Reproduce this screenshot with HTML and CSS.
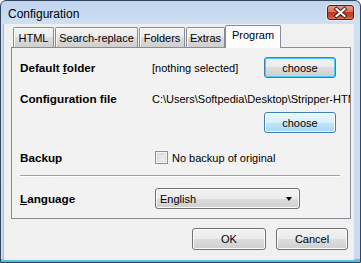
FILE: index.html
```
<!DOCTYPE html>
<html>
<head>
<meta charset="utf-8">
<link rel="stylesheet" href="styles.css">
</head>
<body>
<div class="window">
  <div class="titlebar">
    <span class="title">Configuration</span>
    <span class="close">
      <svg width="27" height="15" viewBox="0 0 27 15">
        <path d="M9.5 4 L17.5 11 M17.5 4 L9.5 11" stroke="#4a130c" stroke-width="4" stroke-linecap="square"/>
        <path d="M9.5 4 L17.5 11 M17.5 4 L9.5 11" stroke="#ffffff" stroke-width="2.2" stroke-linecap="square"/>
      </svg>
    </span>
  </div>
  <div class="client">
    <div class="tabs">
      <div class="tab t-html">HTML</div>
      <div class="tab t-sr">Search-replace</div>
      <div class="tab t-folders">Folders</div>
      <div class="tab t-extras">Extras</div>
      <div class="tab t-program active">Program</div>
    </div>
    <div class="panel">
      <div class="row r1">
        <span class="label">Default <u>f</u>older</span>
        <span class="value">[nothing selected]</span>
        <button class="btn focus choose">choose</button>
      </div>
      <div class="row r2">
        <span class="label">Configuration file</span>
        <span class="value path">C:\Users\Softpedia\Desktop\Stripper-HTML</span>
      </div>
      <div class="row btnrow">
        <button class="btn hover choose">choose</button>
      </div>
      <div class="row r3">
        <span class="label">Backup</span>
        <span class="check"><span class="box"></span><span>No backup of original</span></span>
      </div>
      <div class="sep"></div>
      <div class="row r4">
        <span class="label"><u>L</u>anguage</span>
        <div class="select"><span>English</span><span class="arrow"></span></div>
      </div>
    </div>
    <div class="footer">
      <button class="btn ok">OK</button>
      <button class="btn cancel">Cancel</button>
    </div>
  </div>
</div>
</body>
</html>
```
FILE: styles.css
```
html, body {
  margin: 0;
  padding: 0;
  background: #ffffff;
}
.window {
  width: 361px;
  height: 263px;
  box-sizing: border-box;
  border: 1px solid #34465e;
  border-radius: 6px 6px 0 0;
  background: linear-gradient(to bottom, #bfd4ed 0, #cfdff2 23px, #c8dbf0 calc(100% - 3px), #5fc4ea calc(100% - 3px), #5fc4ea calc(100% - 1px), #7fa6c4 calc(100% - 1px));
  padding: 0 6px 2px 3px;
  display: flex;
  flex-direction: column;
  font-family: "Liberation Sans", Arial, sans-serif;
  font-size: 11px;
  color: #000;
  overflow: hidden;
}
.titlebar {
  height: 23px;
  flex: none;
  display: flex;
  align-items: flex-start;
  justify-content: space-between;
}
.title {
  font-size: 12px;
  margin-left: 4px;
  margin-top: 6px;
  line-height: 14px;
}
.close {
  margin-top: 4px;
  width: 27px;
  height: 15px;
  box-sizing: border-box;
  border: 1px solid #5e1a10;
  border-radius: 3px;
  background: linear-gradient(to bottom, #e49a88 0, #d6735d 45%, #bf3a20 50%, #c94a2e 80%, #de7a55 100%);
  box-shadow: 0 0 0 1px rgba(255,255,255,0.5);
  display: flex;
  align-items: center;
  justify-content: center;
  overflow: hidden;
}
.close svg {
  display: block;
  margin: -1px;
}
.client {
  flex: 1;
  background: #f0f0f0;
  display: flex;
  flex-direction: column;
  box-shadow: -1px 0 0 #9fbddc;
}
.tabs {
  display: flex;
  align-items: flex-end;
  height: 23px;
  margin-left: 9px;
  position: relative;
  z-index: 1;
}
.tab {
  box-sizing: border-box;
  height: 20px;
  border: 1px solid #898c95;
  border-bottom: none;
  border-radius: 2px 2px 0 0;
  background: linear-gradient(to bottom, #f3f3f3 0, #ebebeb 50%, #dddddd 50%, #cfcfcf 100%);
  box-shadow: inset 1px 1px 0 #fbfbfb;
  text-align: center;
  line-height: 20px;
  font-size: 11px;
  margin-right: 1px;
}
.t-html { width: 41px; }
.t-sr { width: 83px; }
.t-folders { width: 46px; }
.t-extras { width: 39px; margin-right: 0; }
.t-program { width: 56px; }
.tab.active {
  line-height: 19px;
  background: #fcfcfe;
  box-shadow: none;
  margin-bottom: -1px;
  height: 23px;
}
.panel {
  margin-left: 7px;
  width: 340px;
  height: 172px;
  flex: none;
  box-sizing: border-box;
  border: 1px solid #898c95;
  background: #f2f2f2;
  padding: 9px 14px 0 8px;
  overflow: hidden;
  display: flex;
  flex-direction: column;
}
.row {
  display: flex;
  align-items: center;
  height: 21px;
  flex: none;
  white-space: nowrap;
}
.label {
  width: 132px;
  flex: none;
  font-weight: bold;
  font-size: 11.7px;
}
.value {
  font-size: 11px;
}
.r2 { margin-top: 10px; }
.btnrow { margin-top: 3px; justify-content: flex-end; }
.r3 { margin-top: 14px; }
.r4 { margin-top: 11px; }
.sep {
  margin-top: 7px;
  margin-right: -4px;
  height: 0;
  border-top: 1px solid #a0a0a0;
  border-bottom: 1px solid #ffffff;
  flex: none;
}
.btn {
  font-family: "Liberation Sans", Arial, sans-serif;
  font-size: 11px;
  color: #000;
  box-sizing: border-box;
  border: 1px solid #707070;
  border-radius: 3px;
  background: linear-gradient(to bottom, #f2f2f2 0, #ebebeb 50%, #dddddd 50%, #cfcfcf 100%);
  box-shadow: inset 0 0 0 1px #fbfbfb;
  padding: 0;
  margin: 0;
}
.choose {
  width: 72px;
  height: 21px;
  margin-left: auto;
}
.btn.focus {
  border-color: #3c7fb1;
  box-shadow: inset 0 0 0 1px #48d0f8;
}
.btn.hover {
  border-color: #3c7fb1;
  background: linear-gradient(to bottom, #eaf6fd 0, #d9f0fc 50%, #bee6fd 50%, #a7d9f5 100%);
  box-shadow: inset 0 0 0 1px #fbfdfe;
}
.check {
  display: flex;
  align-items: center;
  margin-left: 3px;
  font-size: 11px;
}
.box {
  width: 13px;
  height: 13px;
  box-sizing: border-box;
  border: 1px solid #8e8f8f;
  background: linear-gradient(135deg, #d2d4d8 0, #f0f0f0 70%, #fafafa 100%);
  box-shadow: inset 0 0 0 1px #f6f6f6, inset 0 0 0 2px #d8dadd;
  margin-right: 4px;
}
.select {
  margin-left: 3px;
  width: 145px;
  height: 21px;
  box-sizing: border-box;
  border: 1px solid #707070;
  border-radius: 3px;
  background: linear-gradient(to bottom, #f2f2f2 0, #ebebeb 50%, #dddddd 50%, #cfcfcf 100%);
  box-shadow: inset 0 0 0 1px #fbfbfb;
  display: flex;
  align-items: center;
  justify-content: space-between;
  padding: 0 7px 0 4px;
  font-size: 11px;
}
.arrow {
  width: 0;
  height: 0;
  border-left: 3.5px solid transparent;
  border-right: 3.5px solid transparent;
  border-top: 4px solid #000;
}
.footer {
  display: flex;
  justify-content: flex-end;
  gap: 10px;
  margin-top: 9px;
  padding-right: 6px;
}
.ok { width: 74px; height: 22px; }
.cancel { width: 72px; height: 22px; }
```
